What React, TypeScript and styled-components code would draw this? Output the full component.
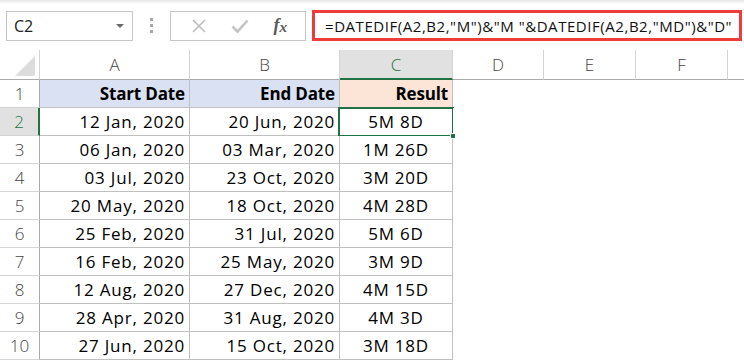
import styled, { createGlobalStyle } from "styled-components";

const GlobalStyle = createGlobalStyle`
  html, body {
    margin: 0;
    padding: 0;
    background: #ffffff;
  }
  body {
    font-family: "Open Sans", "Liberation Sans", sans-serif;
  }
`;

const GREEN = "#217346";

const columns = ["A", "B", "C", "D", "E", "F", ""];

const rows: [string, string, string][] = [
  ["12 Jan, 2020", "20 Jun, 2020", "5M 8D"],
  ["06 Jan, 2020", "03 Mar, 2020", "1M 26D"],
  ["03 Jul, 2020", "23 Oct, 2020", "3M 20D"],
  ["20 May, 2020", "18 Oct, 2020", "4M 28D"],
  ["25 Feb, 2020", "31 Jul, 2020", "5M 6D"],
  ["16 Feb, 2020", "25 May, 2020", "3M 9D"],
  ["12 Aug, 2020", "27 Dec, 2020", "4M 15D"],
  ["28 Apr, 2020", "31 Aug, 2020", "4M 3D"],
  ["27 Jun, 2020", "15 Oct, 2020", "3M 18D"],
];

const App = () => {
  return (
    <PageStyled>
      <GlobalStyle />
      <TopStripStyled />
      <FormulaBarStyled>
        <NameBoxStyled>
          <span>C2</span>
          <DropArrowStyled />
        </NameBoxStyled>
        <GripStyled>
          <i />
          <i />
          <i />
        </GripStyled>
        <ButtonsBoxStyled>
          <svg width="16" height="16" viewBox="0 0 16 16">
            <path d="M2 2 L14 14 M14 2 L2 14" stroke="#bdbdbd" strokeWidth="1.6" fill="none" />
          </svg>
          <svg width="18" height="16" viewBox="0 0 18 16">
            <path d="M1.5 8.5 L6.5 13.5 L16.5 2.5" stroke="#c4c4c4" strokeWidth="2.6" fill="none" />
          </svg>
          <FxStyled>
            f<sub>x</sub>
          </FxStyled>
        </ButtonsBoxStyled>
        <FormulaInputStyled>
          =DATEDIF(A2,B2,"M")&amp;"M "&amp;DATEDIF(A2,B2,"MD")&amp;"D"
        </FormulaInputStyled>
      </FormulaBarStyled>

      <SheetStyled>
        <CornerStyled>
          <svg width="22" height="22" viewBox="0 0 22 22">
            <polygon points="21,1 21,21 1,21" fill="#dcdcdc" />
          </svg>
        </CornerStyled>
        {columns.map((c, i) => (
          <ColHeaderStyled key={i} $active={c === "C"}>
            {c}
          </ColHeaderStyled>
        ))}

        <RowHeaderStyled>1</RowHeaderStyled>
        <CellStyled $fill="#d9e1f2" $bold $bordered>
          Start Date
        </CellStyled>
        <CellStyled $fill="#d9e1f2" $bold $bordered>
          End Date
        </CellStyled>
        <CellStyled $fill="#fce4d6" $bold $bordered>
          Result
        </CellStyled>
        <CellStyled />
        <CellStyled />
        <CellStyled />
        <CellStyled />

        {rows.map((r, i) => (
          <RowFragment key={i} index={i + 2} row={r} />
        ))}
      </SheetStyled>
    </PageStyled>
  );
};

const RowFragment = ({ index, row }: { index: number; row: [string, string, string] }) => {
  return (
    <>
      <RowHeaderStyled $active={index === 2}>{index}</RowHeaderStyled>
      <CellStyled $bordered>{row[0]}</CellStyled>
      <CellStyled $bordered>{row[1]}</CellStyled>
      <CellStyled $bordered $center $selected={index === 2}>
        {row[2]}
      </CellStyled>
      <CellStyled />
      <CellStyled />
      <CellStyled />
      <CellStyled />
    </>
  );
};

const PageStyled = styled.div`
  width: 744px;
  height: 363px;
  overflow: hidden;
  background: #ffffff;
`;

const TopStripStyled = styled.div`
  height: 4px;
  background: linear-gradient(to bottom, #e6e6e6, #ffffff);
`;

const FormulaBarStyled = styled.div`
  display: flex;
  align-items: center;
  height: 31px;
  padding: 6px 2px 9px 6px;
`;

const NameBoxStyled = styled.div`
  display: flex;
  align-items: center;
  justify-content: space-between;
  box-sizing: border-box;
  width: 127px;
  height: 30px;
  padding: 0 8px 0 7px;
  border: 1px solid #c6c6c6;
  font-size: 16px;
  color: #222;
`;

const DropArrowStyled = styled.div`
  width: 0;
  height: 0;
  border-left: 4px solid transparent;
  border-right: 4px solid transparent;
  border-top: 4px solid #6a6a6a;
`;

const GripStyled = styled.div`
  display: flex;
  flex-direction: column;
  align-items: center;
  gap: 3px;
  width: 37px;
  i {
    display: block;
    width: 3px;
    height: 3px;
    background: #a6a6a6;
  }
`;

const ButtonsBoxStyled = styled.div`
  display: flex;
  align-items: center;
  justify-content: space-around;
  box-sizing: border-box;
  width: 136px;
  height: 30px;
  padding: 0 6px 0 8px;
  border: 1px solid #c6c6c6;
`;

const FxStyled = styled.span`
  font-family: "Liberation Serif", serif;
  font-style: italic;
  font-weight: bold;
  font-size: 18px;
  color: #5a5a5a;
  sub {
    font-size: 15px;
    vertical-align: -1px;
  }
`;

const FormulaInputStyled = styled.div`
  display: flex;
  align-items: center;
  box-sizing: border-box;
  width: 430px;
  height: 31px;
  margin-left: 6px;
  padding: 0 6px 0 10px;
  border: 3px solid #ee3b3b;
  font-size: 15px;
  letter-spacing: 0.55px;
  color: #111;
  white-space: nowrap;
`;

const SheetStyled = styled.div`
  display: grid;
  grid-template-columns: 40px 150px 150px 113px 91px 92px 92px 20px;
  grid-template-rows: 30px repeat(10, 28px);
`;

const CornerStyled = styled.div`
  display: flex;
  align-items: flex-end;
  justify-content: flex-end;
  box-sizing: border-box;
  padding: 0 3px 2px 0;
  border-right: 1px solid #d4d4d4;
  border-bottom: 1px solid #ababab;
`;

const ColHeaderStyled = styled.div<{ $active?: boolean }>`
  display: flex;
  align-items: center;
  justify-content: center;
  box-sizing: border-box;
  border-right: 1px solid #d4d4d4;
  border-bottom: ${(p) => (p.$active ? `2px solid ${GREEN}` : "1px solid #ababab")};
  background: ${(p) => (p.$active ? "#e1e1e1" : "#ffffff")};
  color: ${(p) => (p.$active ? GREEN : "#444")};
  font-size: 17px;
  font-weight: 300;
  padding-top: ${(p) => (p.$active ? "1px" : "0")};
`;

const RowHeaderStyled = styled.div<{ $active?: boolean }>`
  display: flex;
  align-items: center;
  justify-content: center;
  box-sizing: border-box;
  border-bottom: 1px solid #d4d4d4;
  border-right: ${(p) => (p.$active ? `2px solid ${GREEN}` : "1px solid #ababab")};
  background: ${(p) => (p.$active ? "#e1e1e1" : "#ffffff")};
  color: ${(p) => (p.$active ? GREEN : "#444")};
  font-size: 17px;
  font-weight: 300;
`;

const CellStyled = styled.div<{
  $fill?: string;
  $bold?: boolean;
  $bordered?: boolean;
  $center?: boolean;
  $selected?: boolean;
}>`
  position: relative;
  display: flex;
  align-items: center;
  justify-content: ${(p) => (p.$center ? "center" : "flex-end")};
  box-sizing: border-box;
  padding: 0 4px 0 4px;
  background: ${(p) => p.$fill ?? "#ffffff"};
  border-right: 1px solid ${(p) => (p.$bordered ? "#c0c0c0" : "transparent")};
  border-bottom: 1px solid ${(p) => (p.$bordered ? "#c0c0c0" : "transparent")};
  font-size: 17px;
  font-weight: ${(p) => (p.$bold ? 700 : 400)};
  letter-spacing: ${(p) => (p.$bold ? "-0.15px" : "0.8px")};
  color: #000;
  white-space: nowrap;

  ${(p) =>
    p.$selected &&
    `
    &::after {
      content: "";
      position: absolute;
      left: -2px;
      top: -1px;
      right: -2px;
      bottom: -2px;
      border: 2px solid ${GREEN};
    }
    &::before {
      content: "";
      position: absolute;
      right: -4px;
      bottom: -4px;
      width: 6px;
      height: 6px;
      background: ${GREEN};
      border: 1px solid #fff;
      z-index: 2;
      box-sizing: border-box;
    }
  `}
`;

export default App;
